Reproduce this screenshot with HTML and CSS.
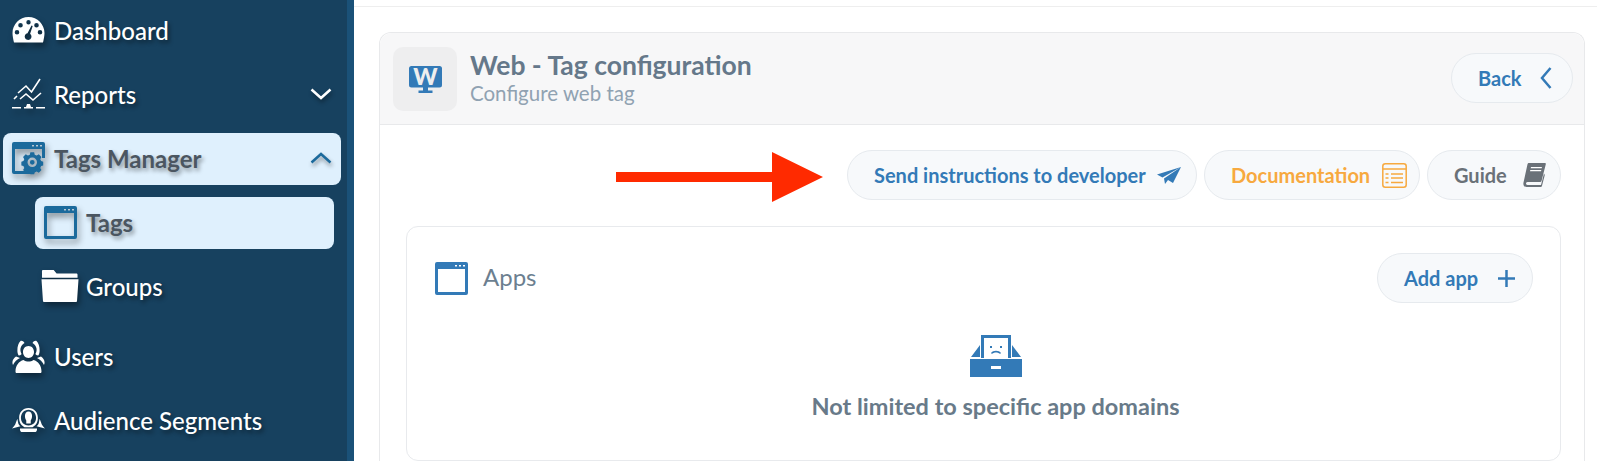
FILE: index.html
```html
<!DOCTYPE html>
<html lang="en">
<head>
  <meta charset="UTF-8">
  <title>Web - Tag configuration</title>
  <link rel="stylesheet" href="styles.css">
</head>
<body>

  <!-- Sidebar -->
  <div class="sidebar">
    <div class="nav">
      <a class="nav-item">
        <svg class="nav-icon" viewBox="0 0 33 26"><path fill="#fff" fill-rule="evenodd" d="M16.500 0C7.500 0 .5 7.500.5 16c0 3 .8 6.500 1.500 9.500h29c.7-3 1.500-6.500 1.500-9.500 0-8.500-7-16-16-16zM16.500 3a2.200 2.200 0 1 1 0 4.400 2.200 2.200 0 0 1 0-4.400zM8.500 6a2.300 2.300 0 1 1 0 4.600 2.300 2.300 0 0 1 0-4.600zM24.500 6a2.300 2.300 0 1 1 0 4.600 2.300 2.300 0 0 1 0-4.600zM5 13a2.300 2.300 0 1 1 0 4.600A2.300 2.300 0 0 1 5 13zM28 13a2.300 2.300 0 1 1 0 4.600 2.300 2.300 0 0 1 0-4.600zM19.500 8.500l1.200.5-2.600 7.800a3.400 3.400 0 1 1-2.600-.6z"/></svg>
        <span>Dashboard</span>
      </a>
      <a class="nav-item">
        <svg class="nav-icon" viewBox="0 0 33 32"><path fill="none" stroke="#fff" stroke-width="1.600" d="M2 21l3-3M6 15l8-7 5.500 6L28 1M8 21l6-5 7 6 8-7"/><path fill="#fff" d="M0 29h9v1.500H0zM12 29h2l1-3h3l1 3h2v1.500h-9zM24 29h9v1.500h-9z"/></svg>
        <span>Reports</span>
        <svg class="chevron" viewBox="0 0 22 12"><path d="M1.500 1.500l9.500 8.500 9.500-8.500"/></svg>
      </a>
      <a class="nav-item active">
        <svg class="nav-icon" viewBox="0 0 33 33"><path fill="#1b6a9c" fill-rule="evenodd" d="M2 0h29a2 2 0 0 1 2 2v14h-3V7H3v22h18v3H2a2 2 0 0 1-2-2V2a2 2 0 0 1 2-2zM20 3v1.500h2V3zM24 3v1.500h2V3zM28 3v1.500h2V3z"/><path fill="#1b6a9c" fill-rule="evenodd" d="M22.500 13h4l.6 2.500 2 .9 2.300-1.300 2.800 2.800-1.300 2.300.9 2 2.200.6v4l-2.200.6-.9 2 1.300 2.300-2.800 2.800-2.300-1.300-2 .9-.6 1.900h-4l-.6-1.900-2-.9-2.300 1.300-2.800-2.800 1.300-2.300-.9-2-2.200-.6v-4l2.200-.6.9-2-1.300-2.300 2.800-2.800 2.300 1.300 2-.9zM24.500 18.500a5 5 0 1 0 0 10 5 5 0 0 0 0-10zM24.500 21a2.500 2.500 0 1 1 0 5 2.500 2.500 0 0 1 0-5z" transform="translate(-3 -2) scale(.95)"/></svg>
        <span>Tags Manager</span>
        <svg class="chevron" viewBox="0 0 22 12"><path d="M1.500 10.500l9.500-8.500 9.500 8.500"/></svg>
      </a>
      <div class="sub-nav">
        <a class="nav-item active">
          <svg class="nav-icon" viewBox="0 0 33 33"><path fill="#1b6a9c" fill-rule="evenodd" d="M2 0h29a2 2 0 0 1 2 2v29a2 2 0 0 1-2 2H2a2 2 0 0 1-2-2V2a2 2 0 0 1 2-2zM3 7v23h27V7zM20 3v1.500h2V3zM24 3v1.500h2V3zM28 3v1.500h2V3z"/></svg>
          <span>Tags</span>
        </a>
        <a class="nav-item">
          <svg class="nav-icon folder" viewBox="0 0 39 33"><path fill="#fff" d="M2 0h11l3 3.500h20c1 0 1.500.5 1.500 1.500v3H1V1c0-.6.4-1 1-1zM.5 9.500h38L37 31.500c0 1-.5 1.500-1.500 1.500h-32c-1 0-1.500-.5-1.500-1.500z"/></svg>
          <span>Groups</span>
        </a>
      </div>
      <a class="nav-item">
        <svg class="nav-icon" viewBox="0 0 33 33"><path fill="#fff" d="M16.500 6c3.500 0 5.500 2.800 5.500 6s-2.200 6-5.500 6-5.500-2.800-5.500-6 2-6 5.500-6zM5 33c-1 0-1.500-.5-1.500-1.500 0-6 3.500-10.500 8-11.500 1.500 1 3.300 1.500 5 1.500s3.500-.5 5-1.500c4.500 1 8 5.500 8 11.500 0 1-.5 1.500-1.500 1.500zM8.500 1c1.500-.5 3 .5 4 2-2 1-3.500 3-4 5.500-.3 2 .2 4 1.200 5.500-1 1-2 1.500-3 1.500C4.500 13 5 4 8.500 1zM24.500 1c-1.500-.5-3 .5-4 2 2 1 3.500 3 4 5.500.3 2-.2 4-1.200 5.500 1 1 2 1.500 3 1.500C28.500 13 28 4 24.500 1zM1 25c-1.500-3 0-6.500 3-8.500l4 1.500c-3 1.500-5.500 3.500-7 7zM32 25c1.500-3 0-6.500-3-8.500l-4 1.500c3 1.500 5.500 3.500 7 7z"/></svg>
        <span>Users</span>
      </a>
      <a class="nav-item">
        <svg class="nav-icon" viewBox="0 0 37 27"><path fill="#fff" fill-rule="evenodd" d="M18.500 0C12 0 8 5 8 11s3 9 6 10.500h9c3-1.500 6-4.500 6-10.500S25 0 18.500 0zM18.500 2C23.500 2 27 6 27 11s-3 8.500-8.500 8.500S10 16 10 11 13.500 2 18.500 2z"/><path fill="#fff" d="M18.500 4c2.500 0 4 2 4 5 0 2-.7 3.500-1.500 5v3.500h-5V14c-.8-1.500-1.500-3-1.500-5 0-3 1.500-5 4-5zM6 12l1 5c.5 1.500 1.500 2.500 2.500 3.500L0 23c1-1 4-4 4.500-7zM31 12l-1 5c-.5 1.500-1.500 2.500-2.500 3.500L37 23c-1-1-4-4-4.500-7zM9 23h19c.5 2-1 4-2 4H11c-1 0-2.500-2-2-4z"/></svg>
        <span>Audience Segments</span>
      </a>
    </div>
  </div>

  <!-- Main Content -->
  <div class="main">
    <div class="card">
      <div class="card-header">
        <div class="logo-box">
          <svg class="logo" viewBox="0 -3 33 31"><path fill="#337ab7" d="M2.500 0h28A2.500 2.500 0 0 1 33 2.500V19a2.500 2.500 0 0 1-2.500 2.500H19v3h4.500V27h-14v-2.500H14v-3H2.500A2.500 2.500 0 0 1 0 19V2.500A2.500 2.500 0 0 1 2.500 0z"/><text x="16.500" y="18.500" class="logo-w">W</text></svg>
        </div>
        <div class="titles">
          <div class="title">Web - Tag configuration</div>
          <div class="subtitle">Configure web tag</div>
        </div>
        <a class="pill blue back">Back
          <svg class="pill-icon" viewBox="0 0 12 22"><path fill="none" stroke="#337ab7" stroke-width="2.500" d="M10.500 1L2 11l8.500 10"/></svg>
        </a>
      </div>

      <div class="card-body">
        <div class="actions">
          <a class="pill blue send">Send instructions to developer
            <svg class="pill-icon plane" viewBox="0 0 24 17"><path fill="#337ab7" d="M24 0L0 7.500l5.500 3zM24 0L7 11.500l1 5.500 3-4 5 3z"/></svg>
          </a>
          <a class="pill orange">Documentation
            <svg class="pill-icon doc" viewBox="0 0 25 25"><g fill="none" stroke="#f7a93f" stroke-width="1.500"><rect x=".8" y=".8" width="23.400" height="23.400" rx="2.500"/><path d="M1 6h23M3.500 11h3M9 11h12M3.500 15h3M9 15h12M3.500 19.500h3M9 19.500h12"/></g></svg>
          </a>
          <a class="pill grey">Guide
            <svg class="pill-icon book" viewBox="0 0 23 24"><path fill="#6a7178" d="M6 0h16c.7 0 1 .5.800 1.200L18.500 18c-.2.700-.6 1-1.300 1H4.500c-2 0-2 3 0 3H18l3-11.500.8 1.500-2.800 10.800c-.2.800-.6 1.200-1.300 1.200H3.500C1 24 0 22 .5 19.500L4.500 1.300C4.700.5 5.200 0 6 0z"/><path fill="#fff" d="M8 4h11l-.4 1.300H7.700zM7.300 7h11l-.3 1.300H7z"/></svg>
          </a>
        </div>

        <div class="apps">
          <div class="apps-head">
            <svg class="apps-icon" viewBox="0 0 33 33"><path fill="#337ab7" fill-rule="evenodd" d="M2 0h29a2 2 0 0 1 2 2v29a2 2 0 0 1-2 2H2a2 2 0 0 1-2-2V2a2 2 0 0 1 2-2zM3 7v23h27V7zM20 3v1.500h2V3zM24 3v1.500h2V3zM28 3v1.500h2V3z"/></svg>
            <span class="apps-label">Apps</span>
            <a class="pill blue add">Add app
              <svg class="pill-icon" viewBox="0 0 17 17"><path fill="none" stroke="#337ab7" stroke-width="2.500" d="M8.500 0v17M0 8.500h17"/></svg>
            </a>
          </div>
          <div class="empty">
            <svg class="empty-icon" viewBox="0 0 52 42"><path fill="#337ab7" fill-rule="evenodd" d="M11 0h30v23h-3V3H14v20h-3zM10 10v12H1zM42 10v12h9zM0 24h52v18H0zM21 31v3h10v-3z"/><path fill="#337ab7" d="M20 11h2v2h-2zM30 11h2v2h-2zM21 18c2-3 8-3 10 0l-1 1c-2-2-6-2-8 0z"/></svg>
            <div class="empty-text">Not limited to specific app domains</div>
          </div>
        </div>
      </div>
    </div>

    <!-- Red annotation arrow -->
    <svg class="arrow" viewBox="0 0 207 50"><path fill="#ff2a00" d="M0 20h156V0l51 25-51 25V30H0z"/></svg>
  </div>

</body>
</html>
```

FILE: styles.css
```css
* { box-sizing: border-box; }
html, body { height: 100%; }
body {
  margin: 0;
  display: flex;
  height: 461px;
  overflow: hidden;
  font-family: Lato, "Open Sans", sans-serif;
  background: #fff;
}

.sidebar {
  width: 354px;
  flex-shrink: 0;
  background: #17415f;
  border-right: 7px solid #1a5178;
}

.nav {
  padding: 5px 6px 0 3px;
  display: flex;
  flex-direction: column;
  gap: 12px;
}

.nav-item {
  height: 52px;
  display: flex;
  align-items: center;
  gap: 9px;
  padding: 0 9px 2px;
  border-radius: 8px;
  color: #fff;
  font-size: 24px;
  font-weight: 500;
  text-shadow: 2px 3px 4px rgba(0, 0, 0, .45);
}

.nav-item.active {
  background: #dff0fd;
  color: #4b5661;
  font-weight: 700;
  text-shadow: 2px 3px 4px rgba(0, 0, 0, .4);
}

.nav-item span { flex: 1; }

.nav-icon {
  width: 33px;
  flex-shrink: 0;
  filter: drop-shadow(2px 4px 3px rgba(0, 0, 0, .4));
}

.folder { width: 38px; margin-left: -3px; margin-right: -2px; }

.chevron {
  width: 22px;
  height: 12px;
  fill: none;
  stroke: #fff;
  stroke-width: 2.500;
  filter: drop-shadow(1px 3px 2px rgba(0, 0, 0, .4));
}

.active .chevron { stroke: #1b6a9c; }

.sub-nav {
  margin: 0 7px 6px 32px;
  display: flex;
  flex-direction: column;
  gap: 12px;
}

.main {
  position: relative;
  flex-grow: 1;
  border-top: 1px solid #eee;
  margin-top: 6px;
  padding: 25px 12px 0 25px;
}

.card {
  border: 1px solid #e8e9eb;
  border-bottom: 0;
  border-radius: 12px 12px 0 0;
  height: 429px;
}

.card-header {
  height: 92px;
  display: flex;
  align-items: center;
  padding: 0 13px;
  background: #f7f7f8;
  border-bottom: 1px solid #e8e9eb;
  border-radius: 12px 12px 0 0;
}

.logo-box {
  width: 64px;
  height: 64px;
  display: flex;
  align-items: center;
  justify-content: center;
  background: #eeeeef;
  border-radius: 10px;
}

.logo { width: 33px; height: 31px; }

.logo-w {
  font-size: 23px;
  font-weight: 900;
  fill: #eee;
  text-anchor: middle;
}

.titles { flex: 1; margin-left: 13px; margin-top: -3px; }

.title {
  font-size: 26.500px;
  font-weight: 700;
  color: #65788a;
  line-height: 32px;
}

.subtitle {
  font-size: 20.500px;
  color: #90a2b2;
  line-height: 24px;
}

.pill {
  height: 50px;
  display: inline-flex;
  align-items: center;
  justify-content: space-between;
  padding: 0 26px;
  background: #f7f9fb;
  border: 1px solid #e6eaee;
  border-radius: 25px;
  font-size: 20px;
  font-weight: 700;
  white-space: nowrap;
}

.blue { color: #337ab7; }
.orange { color: #f7a93f; }
.grey { color: #6a7178; }

.pill-icon { flex-shrink: 0; margin-left: 12px; }

.back { width: 122px; margin: 0 -2px 2px 0; padding-right: 20px; }
.back .pill-icon { width: 12px; height: 22px; }

.actions {
  display: flex;
  justify-content: flex-end;
  gap: 7px;
  padding: 25px 23px 0 0;
}

.send { width: 350px; padding-right: 15px; }
.plane { width: 24px; height: 17px; margin-left: 8px; }
.orange { width: 216px; padding-right: 13px; }
.doc { width: 25px; height: 25px; }
.grey { width: 134px; padding-right: 14px; }
.book { width: 23px; height: 24px; }

.apps {
  margin: 26px 23px 0 26px;
  height: 235px;
  border: 1px solid #e8eaed;
  border-radius: 12px;
  padding: 26px 27px 0 28px;
}

.apps-head {
  display: flex;
  align-items: center;
}

.apps-icon { width: 33px; height: 33px; }

.apps-label {
  flex: 1;
  margin-left: 15px;
  padding-bottom: 3px;
  font-size: 24px;
  color: #6c7f90;
}

.add { width: 156px; padding-right: 17px; }
.add .pill-icon { width: 17px; height: 17px; }

.empty {
  display: flex;
  flex-direction: column;
  align-items: center;
  margin: 32px 0 0 23px;
}

.empty-icon { width: 52px; height: 42px; }

.empty-text {
  margin-top: 15px;
  font-size: 23.500px;
  font-weight: 700;
  color: #687a89;
}

.arrow {
  position: absolute;
  left: 262px;
  top: 145px;
  width: 207px;
  height: 50px;
}
```
